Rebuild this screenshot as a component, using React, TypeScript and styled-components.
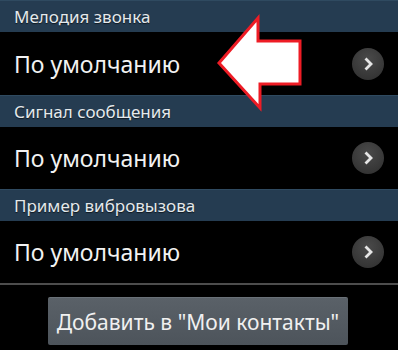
import React from "react";
import styled, { createGlobalStyle } from "styled-components";

const Global = createGlobalStyle`
  html, body { margin: 0; padding: 0; background: #000; }
  body { font-family: "Noto Sans", Roboto, sans-serif; }
`;

const Screen = styled.div`
  position: relative;
  width: 398px;
  height: 350px;
  background: #000;
  overflow: hidden;
  display: flex;
  flex-direction: column;
`;

const Header = styled.div`
  height: 32px;
  box-sizing: border-box;
  background: #253c51;
  border-top: 1px solid #2f4a60;
  display: flex;
  align-items: center;
  padding: 0 14px;
  color: #e4e9ec;
  font-size: 17px;
  text-shadow: 0 1px 1px rgba(0, 0, 0, 0.6);
`;

const Row = styled.div<{ $h: number }>`
  height: ${(p) => p.$h}px;
  display: flex;
  align-items: center;
  justify-content: space-between;
  padding: 0 14px 0 14px;
  color: #f2f2f2;
  font-size: 23px;
`;

const Chevron = styled.div`
  width: 32px;
  height: 32px;
  border-radius: 50%;
  background: radial-gradient(circle at 50% 35%, #4a4a4a, #333 80%);
  display: flex;
  align-items: center;
  justify-content: center;
`;

const Separator = styled.div`
  height: 2px;
  background: #4d4d4d;
`;

const ButtonArea = styled.div`
  display: flex;
  justify-content: center;
  padding-top: 12px;
`;

const AddButton = styled.div`
  width: 300px;
  height: 48px;
  margin-left: -2px;
  box-sizing: border-box;
  border-radius: 2px;
  background: linear-gradient(#5a6168, #4d545b);
  border-top: 1px solid #6a7178;
  display: flex;
  align-items: center;
  justify-content: center;
  color: #f0f0f0;
  font-size: 21px;
`;

const Arrow = styled.svg`
  position: absolute;
  left: 0;
  top: 0;
`;

const ChevronIcon = () => (
  <Chevron>
    <svg width="14" height="16" viewBox="0 0 14 16">
      <path d="M4.5 2.5 L10 8 L4.5 13.5" fill="none" stroke="#e6e6e6" strokeWidth="2.8" strokeLinecap="butt" strokeLinejoin="miter" />
    </svg>
  </Chevron>
);

export default function App() {
  return (
    <>
      <Global />
      <Screen>
        <Header>Мелодия звонка</Header>
        <Row $h={63}>
          <span>По умолчанию</span>
          <ChevronIcon />
        </Row>
        <Header>Сигнал сообщения</Header>
        <Row $h={62}>
          <span>По умолчанию</span>
          <ChevronIcon />
        </Row>
        <Header>Пример вибровызова</Header>
        <Row $h={62}>
          <span>По умолчанию</span>
          <ChevronIcon />
        </Row>
        <Separator />
        <ButtonArea>
          <AddButton>Добавить в "Мои контакты"</AddButton>
        </ButtonArea>
        <Arrow width="398" height="350" viewBox="0 0 398 350">
          <polygon
            points="219,63 258,18 258,41 300,41 300,84 260,84 260,108"
            fill="#ffffff"
            stroke="#ee1c25"
            strokeWidth="3"
            strokeLinejoin="miter"
          />
        </Arrow>
      </Screen>
    </>
  );
}
